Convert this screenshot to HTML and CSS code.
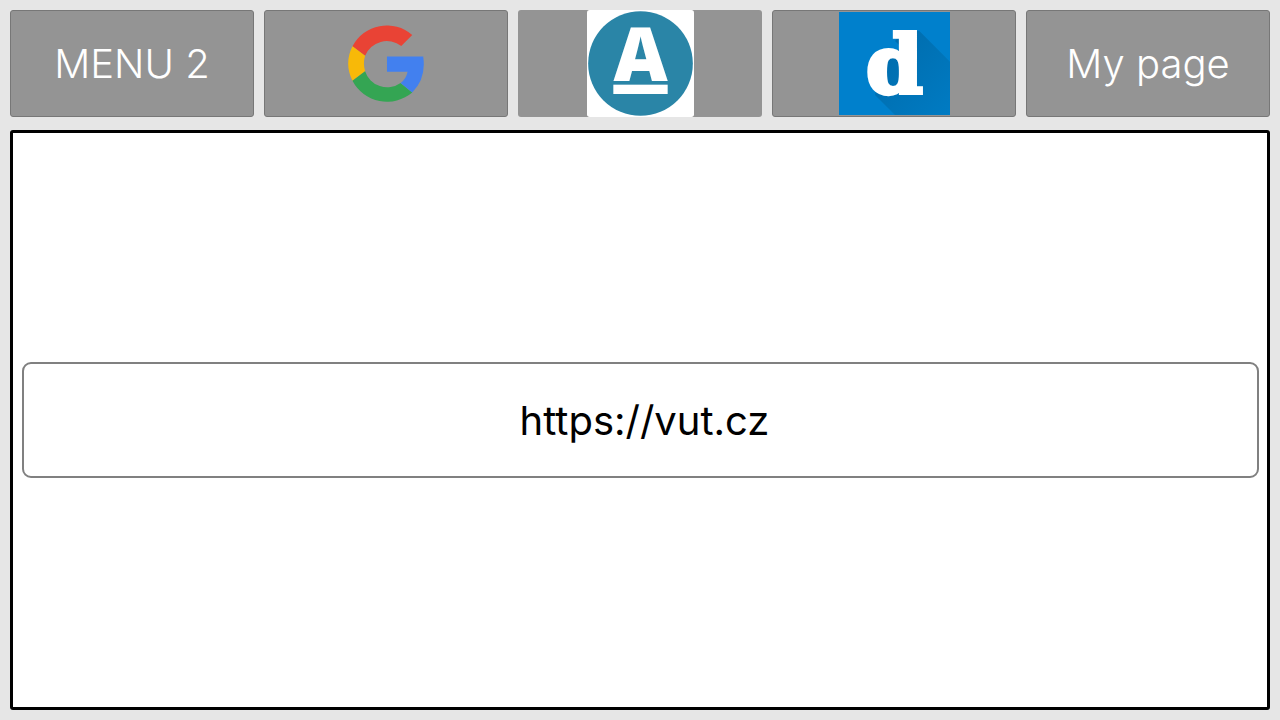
FILE: index.html
```html
<!DOCTYPE html>
<html lang="en">
<head>
<meta charset="utf-8">
<meta name="viewport" content="width=device-width, initial-scale=1">
<title>Browser menu</title>
<link rel="stylesheet" href="styles.css">
</head>
<body>
<nav class="menu">
  <button class="tile" type="button">MENU 2</button>
  <button class="tile" type="button" aria-label="Google">
    <svg class="logo-google" viewBox="51 41 234 238" aria-hidden="true">
      <path fill="#e94335" d="M67 108A117 117 0 0 1 247 74L214 107A71 71 0 0 0 105 137Z"/>
      <path fill="#f8b908" d="M67 108L105 137Q98 160 105 183L67 212Q41 160 67 108Z"/>
      <path fill="#34a553" d="M67 212L105 183A70 70 0 0 0 212 219L247 247A117 117 0 0 1 67 212Z"/>
      <path fill="#4280ef" d="M171 139H280Q290 205 247 247L212 219Q229 206 233 185H171Z"/>
    </svg>
  </button>
  <button class="tile tile-plain" type="button" aria-label="Aktualne">
    <svg class="logo-a" viewBox="0 0 321 321" aria-hidden="true">
      <rect width="321" height="321" rx="8" fill="#fff"/>
      <circle cx="160.500" cy="160.500" r="157" fill="#2a85a7"/>
      <text class="letter-a" x="161" y="213">A</text>
      <rect x="79" y="224" width="163" height="28" fill="#fff"/>
    </svg>
  </button>
  <button class="tile" type="button" aria-label="Denik">
    <svg class="logo-d" viewBox="42 36 333 309" aria-hidden="true">
      <defs>
        <linearGradient id="shade" x1="0" y1="0" x2="1" y2="1">
          <stop offset="0" stop-color="#006aa9"/>
          <stop offset="1" stop-color="#007bc3"/>
        </linearGradient>
      </defs>
      <rect x="42" y="36" width="333" height="309" fill="#0080cc"/>
      <path fill="url(#shade)" d="M210 123L235 93H283L375 185V345H210L150 285L175 190L228 140Z"/>
      <text class="letter-d" x="208" y="280">d</text>
    </svg>
  </button>
  <button class="tile" type="button">My page</button>
</nav>
<main class="panel">
  <input class="address" type="text" value="https://vut.cz" aria-label="Address">
</main>
</body>
</html>
```
FILE: styles.css
```css
* {
  box-sizing: border-box;
}

body {
  margin: 0;
  min-height: 100vh;
  padding: 10px;
  display: flex;
  flex-direction: column;
  gap: 13px;
  background: #e6e6e6;
  font-family: Inter, "Liberation Sans", sans-serif;
}

.menu {
  display: grid;
  grid-template-columns: repeat(5, 1fr);
  gap: 10px;
}

.tile {
  display: flex;
  align-items: center;
  justify-content: center;
  height: 107px;
  padding: 0;
  border: 1px solid #777;
  border-radius: 3px;
  background: #949494;
  color: #fff;
  font: inherit;
  font-size: 40px;
  font-weight: 300;
}

.tile-plain {
  border: 0;
}

.logo-google {
  width: 78px;
  height: 79px;
}

.logo-a {
  width: 107px;
  height: 107px;
  overflow: visible;
}

.logo-d {
  width: 111px;
  height: 103px;
}

.letter-a,
.letter-d {
  fill: #fff;
  text-anchor: middle;
}

.letter-a {
  font-family: "Open Sans", sans-serif;
  font-size: 224px;
  font-weight: 800;
}

.letter-d {
  font-family: "DejaVu Serif", serif;
  font-size: 244px;
  font-weight: 700;
  stroke: #fff;
  stroke-width: 12px;
}

.panel {
  flex: 1;
  display: flex;
  align-items: center;
  padding: 0 8px 0 9px;
  border: 3px solid #000;
  border-radius: 3px;
  background: #fff;
}

.address {
  width: 100%;
  height: 116px;
  padding: 0 0 0 8px;
  border: 2px solid #808080;
  border-radius: 9px;
  background: #fff;
  color: #000;
  font: inherit;
  font-size: 40px;
  text-align: center;
}
```
